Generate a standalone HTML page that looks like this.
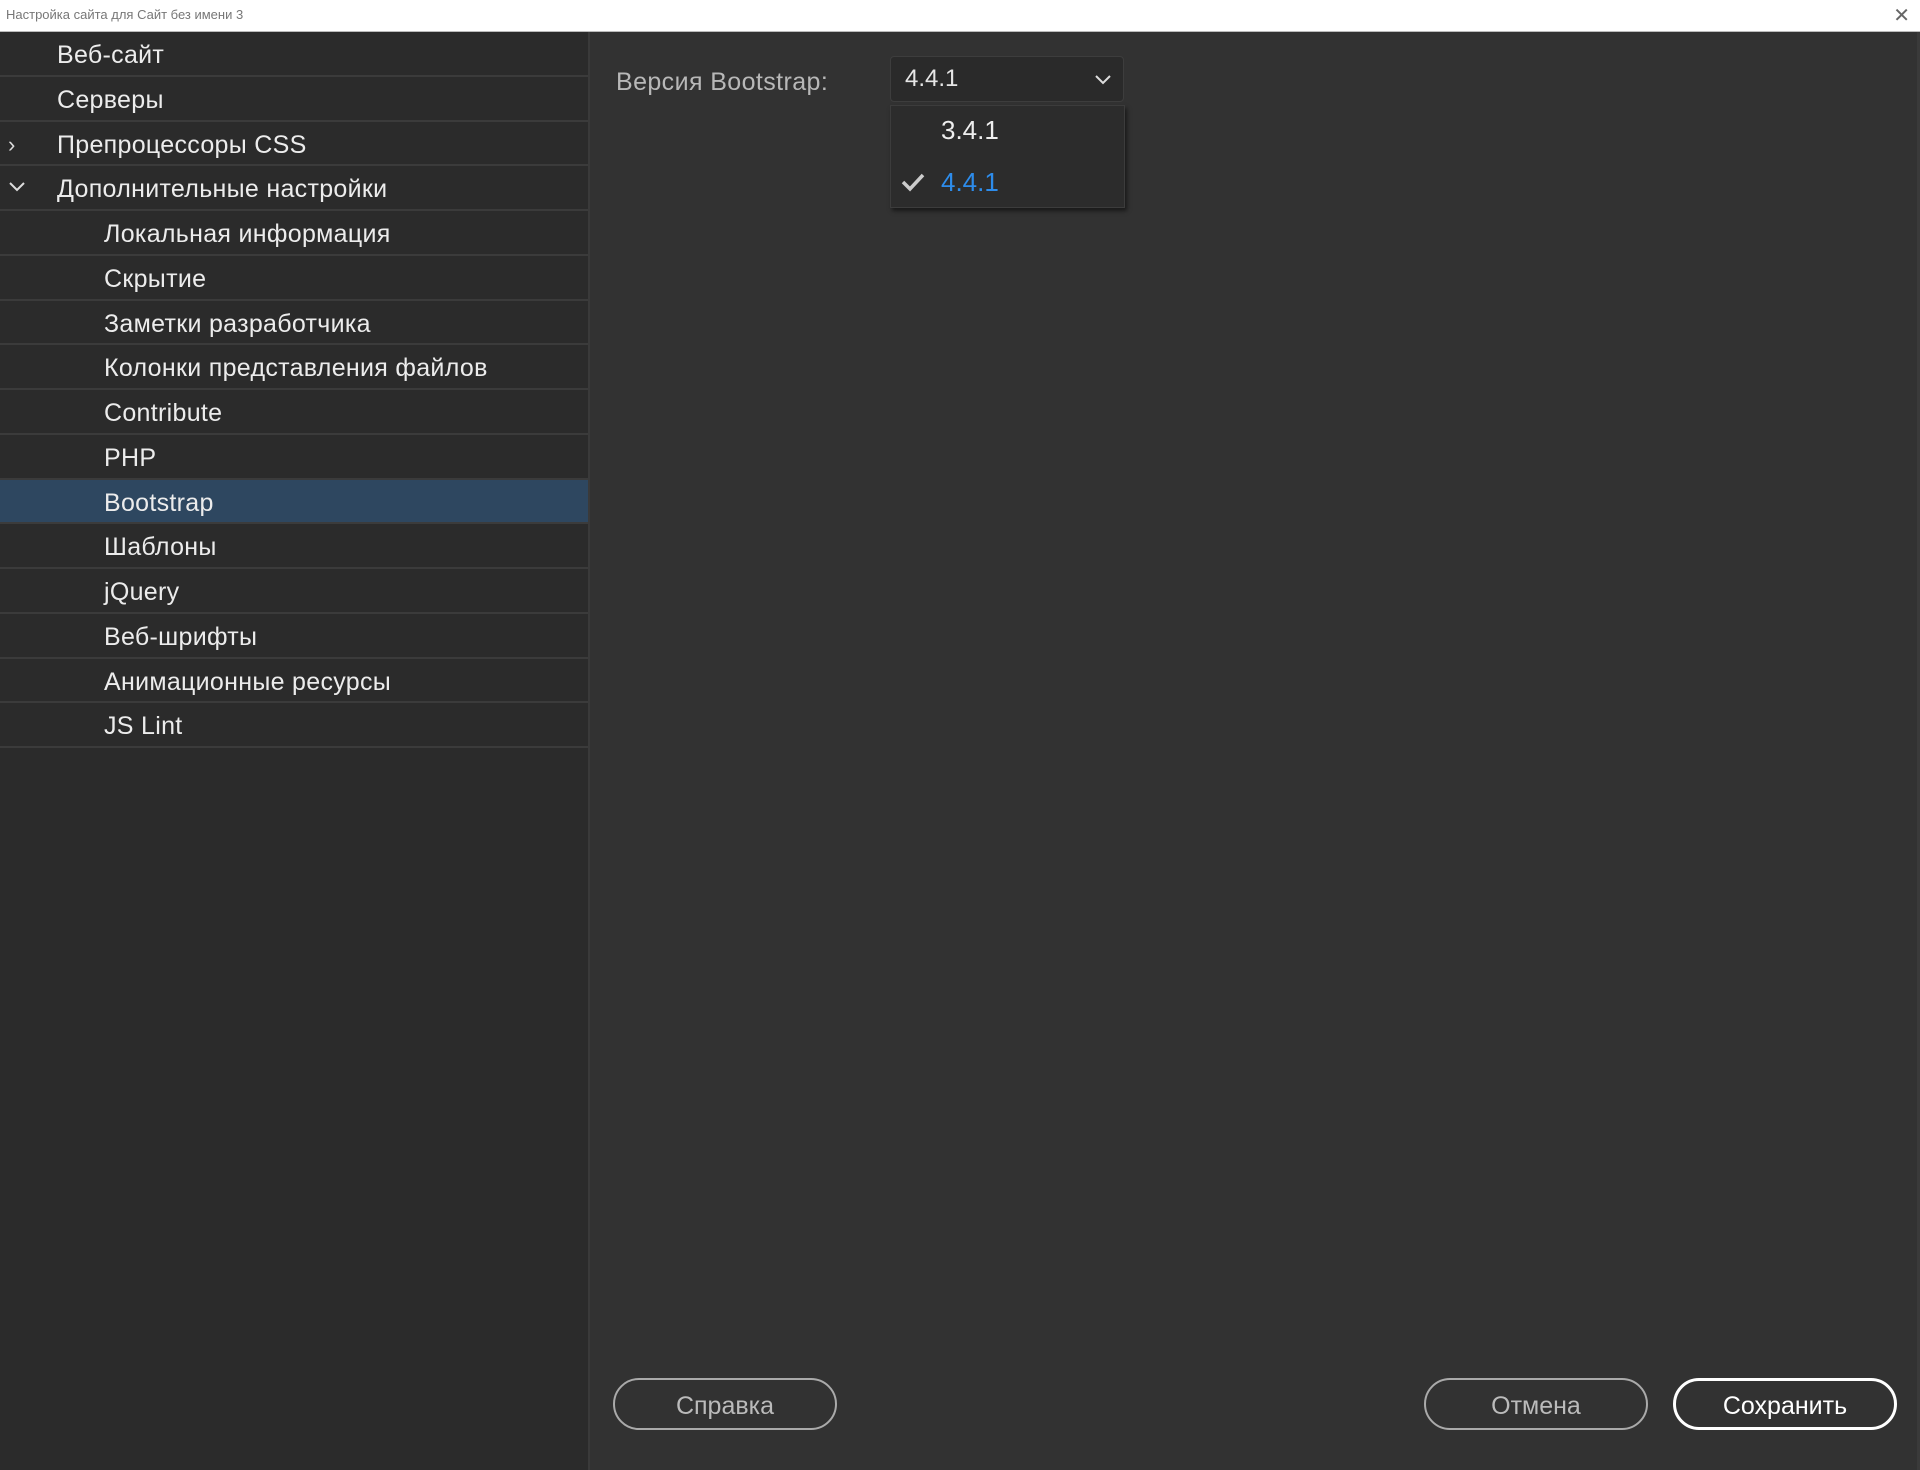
<!DOCTYPE html>
<html><head><meta charset="utf-8"><style>
*{margin:0;padding:0;box-sizing:border-box}
body{width:1920px;height:1470px;background:#323232;font-family:"Liberation Sans","DejaVu Sans",sans-serif;position:relative;overflow:hidden;color:#e6e6e6}
.title{position:absolute;left:0;top:0;width:1920px;height:32px;background:#fff;border-bottom:1px solid #bbb;font-size:13px;color:#777;padding:7px 0 0 6px}
.x{position:absolute;right:10px;top:3px;font-size:20px;color:#666}
.side{position:absolute;left:0;top:32px;width:590px;height:1438px;background:#2b2b2b;border-right:2px solid #3a3a3a}
.row{height:44.75px;border-bottom:2px solid #3b3b3b;font-size:25px;letter-spacing:0.3px;line-height:46px;padding-left:57px;position:relative;color:#ececec}
.row.s{padding-left:104px}
.row.sel{background:#2e4760}
.arr{position:absolute;left:8px;top:0;font-size:22px;color:#ddd}
.lbl{position:absolute;left:616px;top:68px;font-size:25px;letter-spacing:0.4px;color:#b8b8b8}
.dd{position:absolute;left:890px;top:56px;width:234px;height:46px;background:#2a2a2a;border:1px solid #3d3d3d;border-radius:4px;font-size:24px;padding:8px 0 0 14px}
.menu{position:absolute;left:890px;top:105px;width:235px;height:103px;background:#2c2c2c;border:1px solid #3c3c3c;box-shadow:2px 3px 4px rgba(0,0,0,.5);font-size:26px}
.btn{position:absolute;top:1378px;width:224px;height:52px;border:2px solid #aaa;border-radius:26px;font-size:25px;color:#bbb;text-align:center;line-height:52px}
</style></head><body>
<div class="title">Настройка сайта для Сайт без имени 3<span class="x">✕</span></div>
<div class="side">
<div class="row">Веб-сайт</div>
<div class="row">Серверы</div>
<div class="row"><span class="arr">›</span>Препроцессоры CSS</div>
<div class="row"><svg style="position:absolute;left:9px;top:16px" width="16" height="10"><path d="M1 1l7 7 7-7" stroke="#ddd" stroke-width="2" fill="none"/></svg>Дополнительные настройки</div>
<div class="row s">Локальная информация</div>
<div class="row s">Скрытие</div>
<div class="row s">Заметки разработчика</div>
<div class="row s">Колонки представления файлов</div>
<div class="row s">Contribute</div>
<div class="row s">PHP</div>
<div class="row s sel">Bootstrap</div>
<div class="row s">Шаблоны</div>
<div class="row s">jQuery</div>
<div class="row s">Веб-шрифты</div>
<div class="row s">Анимационные ресурсы</div>
<div class="row s">JS Lint</div>
</div>
<div style="position:absolute;left:1917px;top:32px;width:3px;height:1438px;background:#3a3a3a"></div>
<div class="lbl">Версия Bootstrap:</div>
<div class="dd">4.4.1<svg style="position:absolute;right:12px;top:18px" width="16" height="10"><path d="M1 1l7 7 7-7" stroke="#ddd" stroke-width="2" fill="none"/></svg></div>
<div class="menu">
<div style="position:absolute;left:50px;top:9px;color:#eee">3.4.1</div>
<svg style="position:absolute;left:10px;top:66px" width="24" height="20"><path d="M2 10l7 7L22 3" stroke="#ccc" stroke-width="3.5" fill="none"/></svg>
<div style="position:absolute;left:50px;top:61px;color:#2d8ceb">4.4.1</div>
</div>
<div class="btn" style="left:613px">Справка</div>
<div class="btn" style="left:1424px">Отмена</div>
<div class="btn" style="left:1673px;border:3px solid #fff;color:#fff;line-height:50px">Сохранить</div>
</body></html>
